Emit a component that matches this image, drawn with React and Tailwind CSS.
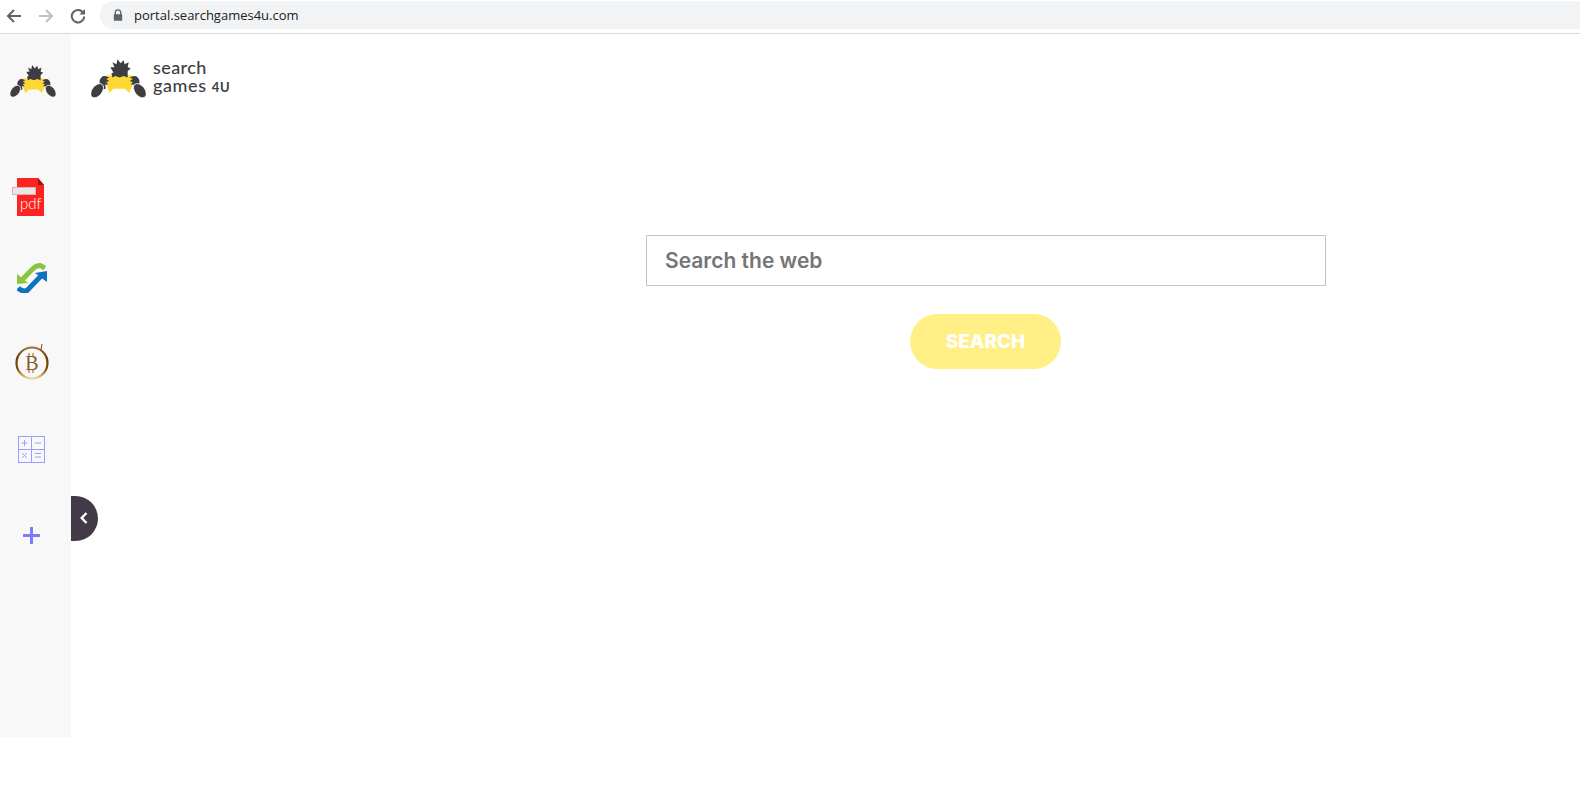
import React from "react";

function Mascot({ className }) {
  return (
    <svg viewBox="0 0 54 39" className={className}>
      <path d="M15 16 L41 16 L41 25 L37.5 33 L33 29 L22 29 L18 33 L15 25 Z" fill="#fdd835" />
      <path d="M21 18 L20 14 L22 13 L19 8 L23 8 L21 3 L25 5 L26 0 L29 4 L32 1 L33 5 L37 3 L36 8 L39 9 L36 12 L36 18 L32 16.5 L28 18 L24 16.5 Z" fill="#3d3d42" />
      <path d="M8.5 21 Q10 16 14 16.5 L18 18 L15 19.5 L18 21.5 L15 22.5 L17 25 L14 25 L14.5 29 L11.5 29.5 Q8 27 8.5 21 Z" fill="#3d3d42" />
      <path d="M47.5 21 Q46 16 42 16.5 L38 18 L41 19.5 L38 21.5 L41 22.5 L39 25 L42 25 L41.5 29 L44.5 29.5 Q48 27 47.5 21 Z" fill="#3d3d42" />
      <ellipse cx="6" cy="31" rx="5" ry="8" transform="rotate(38 6 31)" fill="#3d3d42" stroke="#ffffff" strokeWidth="0.8" />
      <ellipse cx="48" cy="31" rx="5" ry="8" transform="rotate(-38 48 31)" fill="#3d3d42" stroke="#ffffff" strokeWidth="0.8" />
    </svg>
  );
}

function PdfIcon() {
  return (
    <svg viewBox="0 0 33 38" className="w-[33px] h-[38px] block">
      <path d="M5 0 H26 L32 7 V38 H5 Z" fill="#fb2420" />
      <path d="M26 0 L32 7 H26 Z" fill="#a80f0c" />
      <rect x="0.5" y="9.5" width="23" height="7" fill="#e6e6e6" stroke="#e9a9ae" />
      <text x="8" y="31" fill="#ffffff" fontSize="15" fontWeight="300" fontFamily="'Lato', sans-serif">pdf</text>
    </svg>
  );
}

function SyncIcon() {
  return (
    <svg viewBox="0 0 30 30" className="w-[30px] h-[30px] block">
      <path d="M5 17 L15.5 6 Q19 2.5 23 2.5 L28 5" fill="none" stroke="#8bc53f" strokeWidth="5" />
      <path d="M0 11 L0 21 L11 20 Z" fill="#8bc53f" />
      <path d="M1 25 Q5 29 10 27.5 L24 13" fill="none" stroke="#0f72bd" strokeWidth="5" />
      <path d="M18 10 L30 8 L30 19 Z" fill="#0f72bd" />
    </svg>
  );
}

function BitcoinIcon() {
  return (
    <svg viewBox="0 0 34 38" className="w-[34px] h-[38px] block">
      <defs>
        <linearGradient id="btc" x1="0" y1="0" x2="0" y2="1">
          <stop offset="0" stopColor="#a07040" />
          <stop offset="0.35" stopColor="#6f3c08" />
          <stop offset="0.7" stopColor="#7f4a08" />
          <stop offset="1" stopColor="#efd79a" />
        </linearGradient>
      </defs>
      <circle cx="17" cy="20" r="15.5" fill="none" stroke="url(#btc)" strokeWidth="2.2" />
      <path d="M26 7 L27 1" stroke="#7a4310" strokeWidth="1" />
      <text x="17" y="27" textAnchor="middle" fill="#8a5a2a" fontSize="20" fontFamily="'Liberation Serif', serif">B</text>
      <path d="M14 10 V13 M18 10 V13 M14 27 V30 M18 27 V30" stroke="#8a5a2a" strokeWidth="1" />
    </svg>
  );
}

function CalcIcon() {
  const c = "#9a9cff";
  return (
    <svg viewBox="0 0 27 27" className="w-[27px] h-[27px] block">
      <rect x="0.5" y="0.5" width="26" height="26" fill="none" stroke={c} />
      <path d="M13.5 0 V27 M0 13.5 H27" stroke={c} />
      <path d="M3.5 7 H9.5 M6.5 4 V10 M17 7 H23" stroke={c} />
      <path d="M4 17 L9 22 M9 17 L4 22 M17 17.5 H23 M17 21 H23" stroke={c} />
    </svg>
  );
}

export default function App() {
  return (
    <div className="w-[1580px] h-[808px] bg-white overflow-hidden flex flex-col font-['Open_Sans',sans-serif]">
      <header className="h-[34px] shrink-0 border-b border-[#d9d9d9] flex items-start bg-white">
        <div className="flex items-center h-[29px] mt-px pl-[6px] gap-[16px] w-[100px]">
          <svg viewBox="0 0 16 16" className="w-4 h-4 shrink-0" fill="none" stroke="#5f6368" strokeWidth="2">
            <path d="M15 8 H2 M8 2 L2 8 L8 14" />
          </svg>
          <svg viewBox="0 0 16 16" className="w-4 h-4 shrink-0" fill="none" stroke="#bdbfc2" strokeWidth="2">
            <path d="M1 8 H14 M8 2 L14 8 L8 14" />
          </svg>
          <svg viewBox="0 0 16 16" className="w-4 h-4 shrink-0" fill="none" stroke="#5f6368" strokeWidth="2">
            <path d="M13.3 5 A6.2 6.2 0 1 0 14.2 8.5" />
            <path d="M15 1 V6.6 H9.4 Z" fill="#5f6368" stroke="none" />
          </svg>
        </div>
        <div className="flex-1 h-[28px] mt-px bg-[#f1f3f4] rounded-l-[14px] flex items-center pl-[13px]">
          <svg viewBox="0 0 12 14" className="w-[10px] h-[12px] shrink-0" fill="#5f6368">
            <path d="M2 6 V4 a4 4 0 0 1 8 0 V6 h1 v8 H1 V6 Z M3.6 6 h4.8 V4 a2.4 2.4 0 0 0 -4.8 0 Z" />
          </svg>
          <span className="ml-[11px] text-[13px] leading-none text-[#202124] font-['Open_Sans',sans-serif]">portal.searchgames4u.com</span>
        </div>
      </header>

      <main className="flex items-start relative">
        <aside className="w-[71px] h-[703px] shrink-0 bg-[#f8f8f8] relative flex flex-col">
          <Mascot className="w-[46px] h-[33px] ml-[10px] mt-[31px]" />
          <div className="ml-[12px] mt-[80px]"><PdfIcon /></div>
          <div className="ml-[17px] mt-[47px]"><SyncIcon /></div>
          <div className="ml-[15px] mt-[50px]"><BitcoinIcon /></div>
          <div className="ml-[18px] mt-[55px]"><CalcIcon /></div>
          <div className="ml-[23px] mt-[64px]">
            <svg viewBox="0 0 17 17" className="w-[17px] h-[17px] block">
              <path d="M7 0 H10 V7 H17 V10 H10 V17 H7 V10 H0 V7 H7 Z" fill="#7a7cff" />
            </svg>
          </div>
          <button className="absolute left-[71px] top-[462px] w-[27px] h-[45px] bg-[#433a47] rounded-r-[23px] flex items-center justify-center pr-[2px]">
            <svg viewBox="0 0 8 12" className="w-[8px] h-[12px] -mt-[2px]" fill="none" stroke="#ffffff" strokeWidth="2.4">
              <path d="M6.5 1 L1.7 6 L6.5 11" />
            </svg>
          </button>
        </aside>

        <section className="flex-1 relative">
          <div className="flex items-center pl-[20px] pt-[23px] h-[72px]">
            <Mascot className="w-[55px] h-[40px] -mt-[5px]" />
            <div className="ml-[7px] -mt-[9px] text-[#3d3d42] font-['Lato',sans-serif] font-medium leading-[18px] text-[18px] tracking-[0.4px]">
              <div>search</div>
              <div className="whitespace-nowrap tracking-[0.6px]">games <span className="text-[13px] font-bold">4U</span></div>
            </div>
          </div>
          <div className="ml-[575px] mt-[129px] w-[680px] flex flex-col items-center">
            <input
              placeholder="Search the web"
              className="w-full h-[51px] border border-[#c4c4c4] bg-white pl-[18px] pr-[18px] pb-[1px] text-[21px] font-semibold text-[#757575] placeholder:text-[#757575] outline-none font-['Inter',sans-serif]"
            />
            <button className="mt-[28px] mr-px w-[151px] h-[55px] pt-[1px] rounded-[28px] bg-[#ffef85] text-white text-[19px] font-extrabold font-['Inter',sans-serif]">
              SEARCH
            </button>
          </div>
        </section>
      </main>
    </div>
  );
}
